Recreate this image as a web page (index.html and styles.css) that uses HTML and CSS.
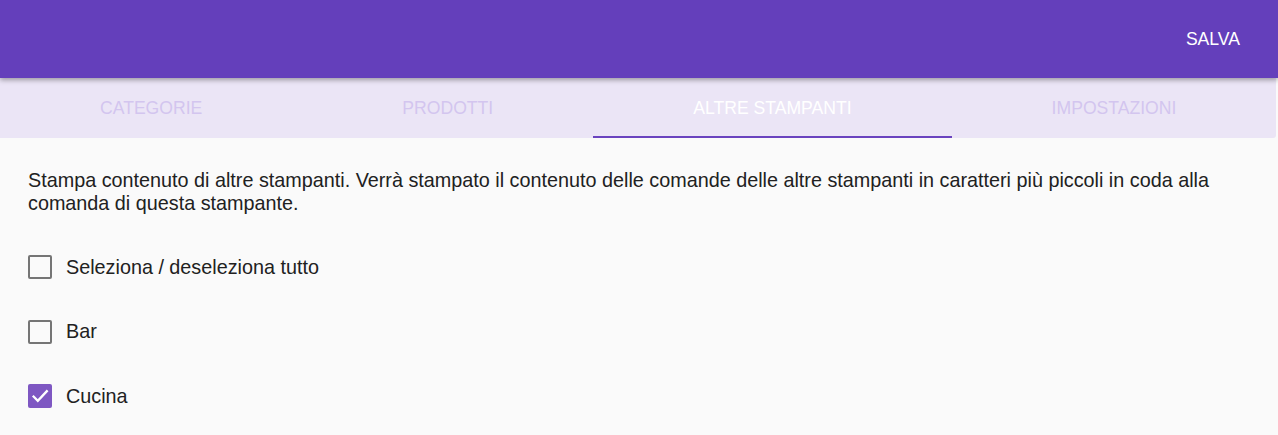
FILE: index.html
```html
<!DOCTYPE html>
<html lang="it">
<head>
    <meta charset="UTF-8">
    <title>Altre stampanti</title>
    <link rel="stylesheet" href="styles.css">
</head>
<body>
    <header class="toolbar">
        <button class="save-btn">SALVA</button>
    </header>

    <nav class="tabs">
        <div class="tab">CATEGORIE</div>
        <div class="tab">PRODOTTI</div>
        <div class="tab active">ALTRE STAMPANTI</div>
        <div class="tab">IMPOSTAZIONI</div>
    </nav>

    <main class="content">
        <p class="intro">Stampa contenuto di altre stampanti. Verrà stampato il contenuto delle comande delle altre stampanti in caratteri più piccoli in coda alla comanda di questa stampante.</p>

        <label class="check-row">
            <span class="box"></span>
            <span class="label">Seleziona / deseleziona tutto</span>
        </label>
        <label class="check-row">
            <span class="box"></span>
            <span class="label">Bar</span>
        </label>
        <label class="check-row">
            <span class="box checked">
                <svg viewBox="0 0 24 24" width="24" height="24"><path d="M4.8 11.8l5 5L19.6 6.4" fill="none" stroke="#fff" stroke-width="2.3"/></svg>
            </span>
            <span class="label">Cucina</span>
        </label>
    </main>
</body>
</html>
```

FILE: styles.css
```css
body {
    margin: 0;
    font-family: "Liberation Sans", Arial, sans-serif;
    background-color: #fafafa;
    color: #212121;
    height: 435px;
    overflow: hidden;
}

.toolbar {
    height: 78px;
    background-color: #643fbb;
    display: flex;
    justify-content: flex-end;
    align-items: center;
    padding-right: 20px;
    box-shadow: 0 2px 5px rgba(0,0,0,0.35);
    position: relative;
    z-index: 2;
}
.save-btn {
    background: none;
    border: none;
    color: #fff;
    font-family: inherit;
    font-size: 17.6px;
    padding: 8px 18px;
}

.tabs {
    display: flex;
    height: 60px;
    background-color: #ebe5f6;
    margin-right: 2px;
    border-bottom-right-radius: 3px;
}
.tab {
    flex: 1 1 auto;
    padding: 2px 100px 0;
    display: flex;
    align-items: center;
    justify-content: center;
    font-size: 17.6px;
    white-space: nowrap;
    color: #d3c5ef;
    box-sizing: border-box;
    border-bottom: 2px solid transparent;
}
.tab.active {
    color: #fff;
    border-bottom-color: #6a43bf;
}

.content {
    padding: 31px 28px 0;
}
.intro {
    font-size: 19.8px;
    line-height: 22.5px;
    margin: 0 0 21px;
}

.check-row {
    display: flex;
    align-items: center;
    height: 64.5px;
}
.box {
    flex: 0 0 24px;
    height: 24px;
    box-sizing: border-box;
    border: 2px solid #757575;
    border-radius: 2px;
    margin-right: 14px;
}
.box.checked {
    background-color: #7e57c2;
    border: none;
}
.box svg {
    display: block;
}
.label {
    font-size: 19.8px;
}
```
